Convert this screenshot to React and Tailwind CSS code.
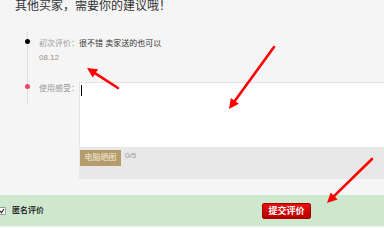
import React from "react";

function Arrow({ x1, y1, x2, y2 }) {
  const dx = x2 - x1;
  const dy = y2 - y1;
  const len = Math.sqrt(dx * dx + dy * dy);
  const ux = dx / len;
  const uy = dy / len;
  const hl = 10;
  const hw = 5;
  const bx = x2 - ux * hl;
  const by = y2 - uy * hl;
  const p1 = `${x2},${y2}`;
  const p2 = `${bx - uy * hw},${by + ux * hw}`;
  const p3 = `${bx + uy * hw},${by - ux * hw}`;
  return (
    <g>
      <line x1={x1} y1={y1} x2={bx + ux * 2} y2={by + uy * 2} stroke="#ff0000" strokeWidth="2.6" strokeLinecap="round" />
      <polygon points={`${p1} ${p2} ${p3}`} fill="#ff0000" />
    </g>
  );
}

export default function App() {
  return (
    <div className="relative w-[384px] h-[228px] overflow-hidden bg-[#f5f5f5] font-['Liberation_Sans','Noto_Sans_CJK_SC',sans-serif] text-[#333]">
      <div className="pl-[15px] h-[12px] text-[12px] leading-[12px] text-[#333]">
        其他买家，需要你的建议哦！
      </div>

      <div className="relative mt-[19px] pt-[6px]">
        <div className="absolute left-[27px] top-0 h-[73px] w-px bg-[#dedede]" />

        <div className="flex items-start">
          <div className="ml-[25px] mt-[2px] w-[5px] h-[5px] rounded-full bg-black relative" />
          <div className="ml-[9px] text-[8px] leading-[14px]">
            <div>
              <span className="text-[#999]">初次评价：</span>
              <span className="text-[#333]">很不错 卖家送的也可以</span>
            </div>
            <div className="text-[#9a9080]">08.12</div>
          </div>
        </div>

        <div className="flex items-start mt-[17px]">
          <div className="ml-[25px] mt-[2px] w-[5px] h-[5px] rounded-full bg-[#ee4466] relative" />
          <div className="ml-[9px] w-[40px] text-[8px] leading-[14px] text-[#999]">使用感受：</div>
          <div className="flex-1 flex flex-col">
            <div className="h-[65px] bg-white border-t border-l border-[#e3e3e3] pl-px pt-[2px]">
              <div className="w-px h-[11px] bg-black" />
            </div>
            <div className="h-[32px] bg-[#e8e8e8] flex items-start pt-[3px] pl-px">
              <div className="w-[41px] h-[16px] bg-[#b49c6c] text-[#f3ead8] text-[8px] leading-[16px] text-center">
                电脑晒图
              </div>
              <div className="ml-[4px] text-[8px] leading-[12px] text-[#999]">0/5</div>
            </div>
          </div>
        </div>
      </div>

      <div className="mt-[16px] h-[31px] bg-[#cde8cd] flex items-center">
        <div className="-ml-[2px] w-[8px] h-[8px] bg-white border border-[#999] rounded-[1px] flex items-center justify-center">
          <svg width="6" height="6" viewBox="0 0 6 6">
            <path d="M1 3 L2.5 4.7 L5 1" stroke="#333" strokeWidth="1.2" fill="none" />
          </svg>
        </div>
        <div className="ml-[6px] text-[8px] leading-[10px] font-bold text-[#333]">匿名评价</div>
        <button className="ml-[218px] w-[49px] h-[16px] rounded-[2px] border border-[#a00000] bg-gradient-to-b from-[#e81010] to-[#b80000] text-white text-[9px] leading-[14px] font-bold">
          提交评价
        </button>
      </div>

      <svg className="absolute inset-0 pointer-events-none" width="384" height="228">
        <Arrow x1={118} y1={88} x2={87} y2={68} />
        <Arrow x1={274} y1={47} x2={229} y2={109} />
        <Arrow x1={372} y1={159} x2={327} y2={203} />
      </svg>
    </div>
  );
}
